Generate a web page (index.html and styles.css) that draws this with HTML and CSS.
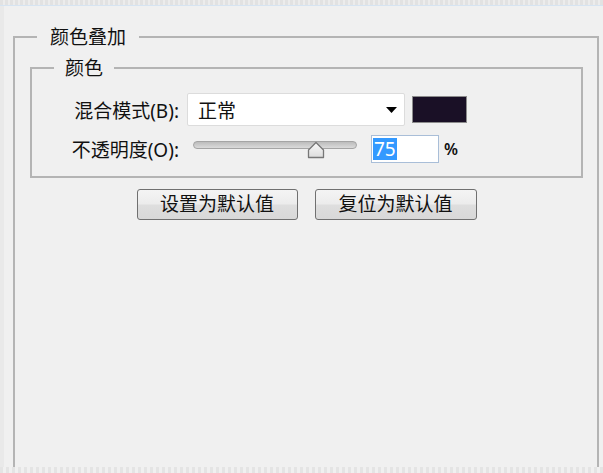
FILE: index.html
```html
<!DOCTYPE html>
<html lang="zh">
<head>
<meta charset="utf-8">
<link rel="stylesheet" href="styles.css">
</head>
<body>
<div class="topbar"></div>
<div class="page">
  <fieldset class="outer">
    <legend class="legend-outer">颜色叠加</legend>
    <fieldset class="inner">
      <legend class="legend-inner">颜色</legend>
      <div class="row row-mode">
        <span class="label">混合模式(B):</span>
        <div class="select">
          <span>正常</span>
          <svg class="arrow" width="11" height="6" viewBox="0 0 11 6"><path d="M0 0 H11 L5.5 6 Z" fill="#000"/></svg>
        </div>
        <div class="swatch"></div>
      </div>
      <div class="row row-opacity">
        <span class="label">不透明度(O):</span>
        <div class="slider">
          <div class="track"></div>
          <svg class="thumb" width="18" height="18" viewBox="0 0 18 18">
            <defs>
              <linearGradient id="tg" x1="0" y1="0" x2="0" y2="1">
                <stop offset="0" stop-color="#fafafa"/>
                <stop offset="1" stop-color="#dcdcdc"/>
              </linearGradient>
            </defs>
            <path d="M1.5 16.5 V9 L9 1.5 L16.5 9 V16.5 Z" fill="url(#tg)" stroke="#777" stroke-width="1.3" stroke-linejoin="round"/>
          </svg>
        </div>
        <div class="input"><span class="selected">75</span></div>
        <span class="pct">%</span>
      </div>
    </fieldset>
    <div class="buttons">
      <button class="btn btn-a">设置为默认值</button>
      <button class="btn btn-b">复位为默认值</button>
    </div>
  </fieldset>
</div>
<div class="bottombar"></div>
</body>
</html>
```

FILE: styles.css
```css
html, body {
  margin: 0;
  padding: 0;
  background: #f0f0f0;
  overflow: hidden;
  height: 473px;
}
body {
  display: flex;
  flex-direction: column;
  font-family: "Noto Sans", "Noto Sans CJK SC", sans-serif;
  font-size: 19px;
  color: #111;
}
.topbar {
  height: 5px;
  flex: none;
  background: repeating-linear-gradient(90deg, #e2e2e2 0 3px, #ececec 3px 5px);
  border-bottom: 1px solid #d6e4f2;
}
.page {
  flex: 1;
  overflow: hidden;
  padding: 20px 0 0 9px;
  border-left: 4px solid #e9e9e9;
}
.bottombar {
  height: 6px;
  flex: none;
  background: repeating-linear-gradient(90deg, #e4e4e4 0 3px, #f0f0f0 3px 6px);
}
.outer {
  margin: 0;
  width: 586px;
  height: 470px;
  box-sizing: border-box;
  border: 2px solid #b4b4b4;
  padding: 0 14px 0 15px;
}
.legend-outer {
  margin-left: 7px;
  padding: 0 13px;
  line-height: 22px;
}
.inner {
  margin: 9px 0 0 0;
  width: 553px;
  box-sizing: border-box;
  border: 2px solid #b4b4b4;
  padding: 14px 8px 13px 8px;
}
.legend-inner {
  margin-left: 14px;
  padding: 0 11px;
  line-height: 22px;
}
.row {
  display: flex;
  align-items: center;
}
.row-mode {
  height: 33px;
}
.row-opacity {
  height: 28px;
  margin-top: 9px;
}
.label {
  width: 139px;
  text-align: right;
  white-space: nowrap;
  margin-right: 8px;
}
.select {
  width: 218px;
  height: 33px;
  box-sizing: border-box;
  background: #fff;
  border: 1px solid #dcdcdc;
  border-radius: 2px;
  display: flex;
  align-items: center;
  justify-content: space-between;
  padding: 0 7px 0 10px;
}
.swatch {
  margin-left: 7px;
  width: 55px;
  height: 27px;
  box-sizing: border-box;
  background: #1a1026;
  border: 1px solid #8c8c8c;
}
.slider {
  position: relative;
  width: 176px;
  height: 28px;
}
.track {
  margin: 6px 6px 0 6px;
  height: 8px;
  box-sizing: border-box;
  border: 1px solid #a4a4a4;
  border-radius: 4px;
  background: linear-gradient(#bcbcbc, #dadada);
}
.thumb {
  position: absolute;
  left: 120px;
  top: 6px;
}
.input {
  margin-left: 8px;
  width: 68px;
  height: 28px;
  box-sizing: border-box;
  background: #fff;
  border: 1px solid #a9bed8;
  padding: 2px 1px;
  display: flex;
}
.selected {
  background: #3399ff;
  color: #fff;
  line-height: 22px;
  font-size: 19px;
  padding: 0 1px;
}
.pct {
  margin-left: 5px;
  font-size: 16px;
  font-weight: 600;
}
.buttons {
  display: flex;
  justify-content: center;
  gap: 17px;
  margin-top: 11px;
}
.btn {
  height: 31px;
  font-family: inherit;
  font-size: 19px;
  color: #111;
  border: 1px solid #707070;
  border-radius: 3px;
  background: linear-gradient(#f4f4f4 0%, #ececec 48%, #dedede 52%, #d8d8d8 100%);
  padding: 0;
  line-height: 29px;
}
.btn-a { width: 161px; }
.btn-b { width: 162px; }
```
